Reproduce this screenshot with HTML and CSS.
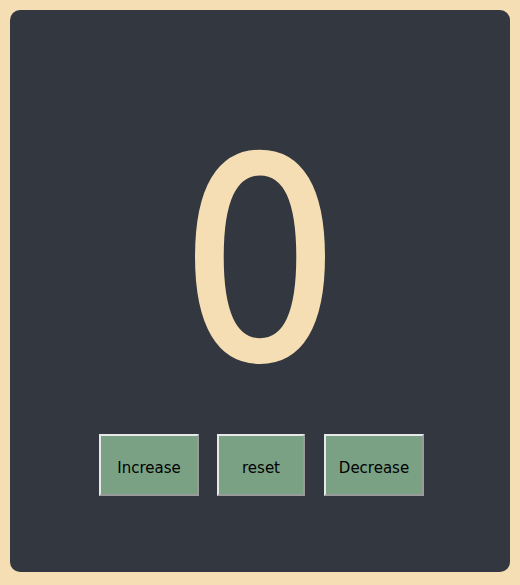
FILE: index.html
```html
<!DOCTYPE html>
<html>
<head>
<meta charset="utf-8">
<link rel="stylesheet" href="styles.css">
</head>
<body>
<main class="card">
  <div class="count">0</div>
  <div class="controls">
    <button class="btn btn-wide">Increase</button>
    <button class="btn btn-reset">reset</button>
    <button class="btn btn-wide btn-last">Decrease</button>
  </div>
</main>
</body>
</html>
```
FILE: styles.css
```css
html, body {
  margin: 0;
  padding: 0;
}
body {
  background: #f5deb3;
  padding: 10px;
  font-family: "DejaVu Sans", Verdana, sans-serif;
}
.card {
  box-sizing: border-box;
  width: 500px;
  height: 562px;
  background: #333740;
  border-radius: 10px;
  display: flex;
  flex-direction: column;
  align-items: center;
  justify-content: center;
  padding-bottom: 2px;
}
.count {
  font-family: "DejaVu Sans Condensed", "DejaVu Sans", sans-serif;
  font-stretch: condensed;
  font-size: 278px;
  line-height: 344px;
  padding-top: 6px;
  color: #f5deb3;
  -webkit-text-stroke: 4px #f5deb3;
}
.controls {
  display: flex;
  gap: 18px;
  padding-left: 3px;
}
.btn {
  box-sizing: border-box;
  height: 62px;
  font-family: "DejaVu Sans", Verdana, sans-serif;
  font-size: 15px;
  color: #000;
  background: #7aa184;
  border: 2px solid;
  border-color: #e8e8e8 #9a9a9a #9a9a9a #e8e8e8;
  padding: 6px 0 0;
}
.btn-wide { width: 100px; }
.btn-reset { width: 88px; }
.btn-last { margin-left: 1px; }
```
